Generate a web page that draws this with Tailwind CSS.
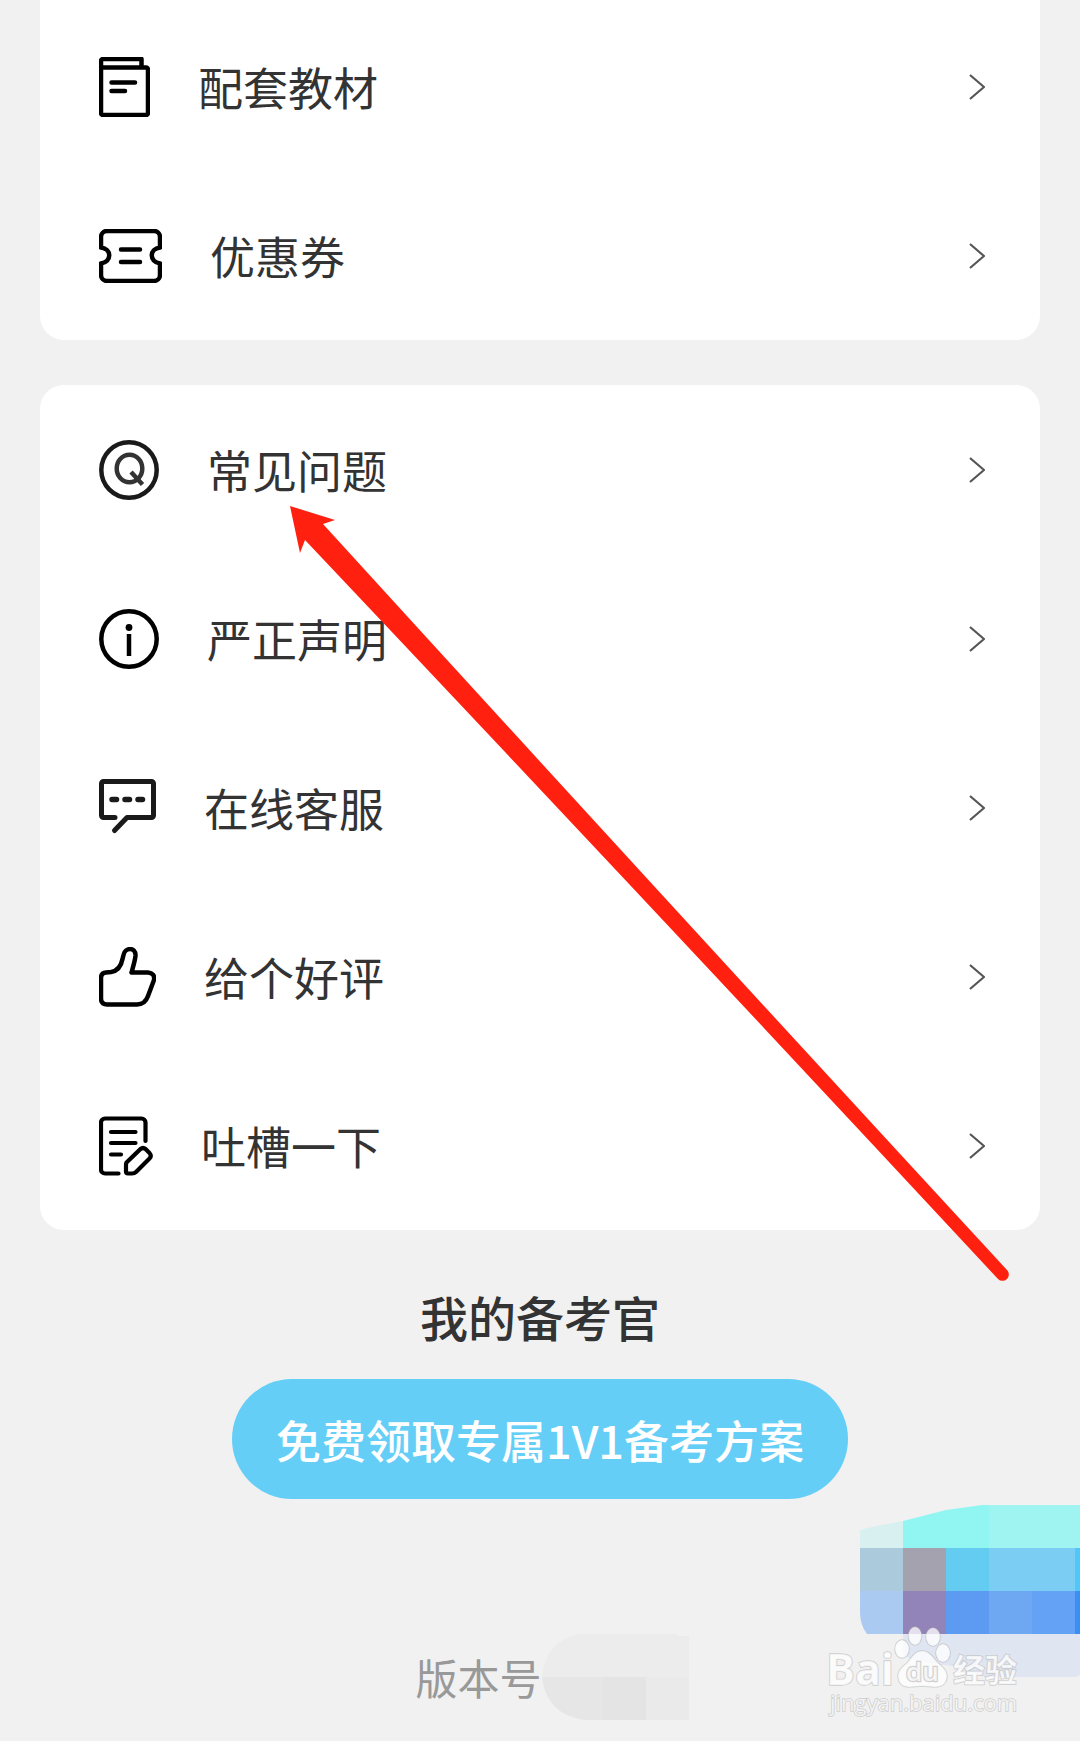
<!DOCTYPE html>
<html lang="zh-CN">
<head>
    <meta charset="UTF-8">
    <meta name="viewport" content="width=device-width, initial-scale=1">
    <title>我的</title>
    <script src="https://cdn.jsdelivr.net/npm/@tailwindcss/browser@4"></script>
</head>
<body class="bg-[#f1f1f1] font-['Noto_Sans_CJK_SC',sans-serif] text-[#333]">
<main class="relative min-h-screen overflow-hidden">

    <nav class="mx-10 rounded-b-3xl bg-white pt-0.5 text-[45px] leading-none">
        <a href="#" class="flex h-[169px] items-center gap-12 pl-[59px] pr-[55px]">
            <svg class="h-[60px] w-[51px] text-black" viewBox="0 0 51 60" fill="none" stroke="currentColor" stroke-width="4.500" stroke-linejoin="round" stroke-linecap="round">
                <path d="M2 10V4a2 2 0 0 1 2-2H42.500V10M2 10.500H47a2 2 0 0 1 2 2V56a2 2 0 0 1-2 2H4a2 2 0 0 1-2-2Z"/>
                <path d="M12.500 25.500H36M12.500 34H26"/>
            </svg>
            <span class="flex-1">配套教材</span>
            <svg class="h-[26px] w-4 text-[#555]" viewBox="0 0 16 26" fill="none" stroke="currentColor" stroke-width="2.200"><path d="M1 1 15 13 1 25"/></svg>
        </a>
        <a href="#" class="flex h-[169px] items-center gap-12 pl-[59px] pr-[55px]">
            <svg class="h-[54px] w-[63px] text-black" viewBox="0 0 63 54" fill="none" stroke="currentColor" stroke-width="4.500" stroke-linecap="round">
                <path stroke-linejoin="round" d="M8 2H55a6 6 0 0 1 6 6V18.500C50 20 50 32.500 61 34.500V46a6 6 0 0 1-6 6H8a6 6 0 0 1-6-6V34.500C13 32.500 13 20 2 18.500V8a6 6 0 0 1 6-6Z"/>
                <path d="M22 20.500H41M22 33H41"/>
            </svg>
            <span class="flex-1">优惠券</span>
            <svg class="h-[26px] w-4 text-[#555]" viewBox="0 0 16 26" fill="none" stroke="currentColor" stroke-width="2.200"><path d="M1 1 15 13 1 25"/></svg>
        </a>
    </nav>

    <nav class="mx-10 mt-[45px] rounded-3xl bg-white text-[45px] leading-none">
        <a href="#" class="flex h-[169px] items-center gap-12 pl-[59px] pr-[55px]">
            <svg class="size-[60px] text-[#1a1a1a]" viewBox="0 0 60 60" fill="none" stroke="currentColor" stroke-width="4.500">
                <circle cx="30" cy="30" r="27.700"/>
                <ellipse cx="30.500" cy="28.500" rx="12.800" ry="13.700" stroke="#333"/>
                <path d="M32 32 43.500 44.500" stroke="#333"/>
            </svg>
            <span class="flex-1">常见问题</span>
            <svg class="h-[26px] w-4 text-[#555]" viewBox="0 0 16 26" fill="none" stroke="currentColor" stroke-width="2.200"><path d="M1 1 15 13 1 25"/></svg>
        </a>
        <a href="#" class="flex h-[169px] items-center gap-12 pl-[59px] pr-[55px]">
            <svg class="size-[60px] text-black" viewBox="0 0 60 60" fill="none" stroke="currentColor" stroke-width="4.500">
                <circle cx="30" cy="30" r="27.700"/>
                <path d="M30 25V47"/>
                <circle cx="30" cy="18.500" r="3.400" fill="currentColor" stroke="none"/>
            </svg>
            <span class="flex-1">严正声明</span>
            <svg class="h-[26px] w-4 text-[#555]" viewBox="0 0 16 26" fill="none" stroke="currentColor" stroke-width="2.200"><path d="M1 1 15 13 1 25"/></svg>
        </a>
        <a href="#" class="flex h-[169px] items-center gap-12 pl-[59px] pr-[55px]">
            <svg class="h-[60px] w-[57px] text-[#1a1a1a]" viewBox="0 -1 57 60" fill="none" stroke="currentColor" stroke-width="5" stroke-linecap="round" stroke-linejoin="round">
                <path d="M16 38.500H4.500a2 2 0 0 1-2-2V4.500a2 2 0 0 1 2-2H52.500a2 2 0 0 1 2 2V36.500a2 2 0 0 1-2 2H28L15.500 51.500"/>
                <path stroke-width="5.500" d="M13 20.500h4.500M26 20.500h4.500M39 20.500h4.500"/>
            </svg>
            <span class="flex-1">在线客服</span>
            <svg class="h-[26px] w-4 text-[#555]" viewBox="0 0 16 26" fill="none" stroke="currentColor" stroke-width="2.200"><path d="M1 1 15 13 1 25"/></svg>
        </a>
        <a href="#" class="flex h-[169px] items-center gap-12 pl-[59px] pr-[55px]">
            <svg class="h-[60px] w-[57px] text-black" viewBox="0 0 57 60" fill="none" stroke="currentColor" stroke-width="4.500" stroke-linejoin="round">
                <path d="M2 31Q2 26 7 25.500L12 25C18 24 22 20 23.500 12L24.500 8C26 0 37 0 36.500 8.500C36 14 34 20 32.500 25.500H49Q56 26 55 33L49 49Q46 57.500 38 57.500H8Q2 57.500 2 51.500Z"/>
            </svg>
            <span class="flex-1">给个好评</span>
            <svg class="h-[26px] w-4 text-[#555]" viewBox="0 0 16 26" fill="none" stroke="currentColor" stroke-width="2.200"><path d="M1 1 15 13 1 25"/></svg>
        </a>
        <a href="#" class="flex h-[169px] items-center gap-12 pl-[59px] pr-[55px]">
            <svg class="h-[60px] w-[54px] text-black" viewBox="0 0 54 60" fill="none" stroke="currentColor" stroke-width="4.200" stroke-linecap="round" stroke-linejoin="round">
                <path d="M46.500 25V6.500a4 4 0 0 0-4-4H6a4 4 0 0 0-4 4V53.500a4 4 0 0 0 4 4H19.500"/>
                <path d="M12 16H36.500M12 27H36.500M12 38.500H22"/>
                <path d="M27.500 46.500 41.500 33Q44 31 46.500 33L50.500 37Q53 40 50.500 42.500L37 56Q35.500 57.500 33 57.500H29Q27 57.500 27 55.500V49Q27 47.500 27.500 46.500Z"/>
            </svg>
            <span class="flex-1">吐槽一下</span>
            <svg class="h-[26px] w-4 text-[#555]" viewBox="0 0 16 26" fill="none" stroke="currentColor" stroke-width="2.200"><path d="M1 1 15 13 1 25"/></svg>
        </a>
    </nav>

    <section class="flex flex-col items-center pt-[62px]">
        <h2 class="text-[48px] font-medium leading-none">我的备考官</h2>
        <button type="button" class="mt-[39px] h-[120px] rounded-full bg-[#64cef7] px-11 text-[45px] font-medium leading-none text-white">免费领取专属1V1备考方案</button>
    </section>

    <footer class="flex items-center justify-center pb-5 pl-6 pt-[135px] text-[42px] leading-none text-[#999]">
        <span>版本号</span>
        <svg class="h-[86px] w-[147px]" viewBox="0 0 147 86">
            <path fill="#ececec" d="M0 43Q4 6 38 0H134L137 2H147V43Z"/>
            <path fill="#e6e6e6" d="M0 43H104V86H42Q4 80 0 43Z"/>
            <path fill="#e4e4e4" d="M61 43h43v43H61z"/>
            <path fill="#eaeaea" d="M104 43h43v43h-43z"/>
        </svg>
    </footer>

    <!-- floating promo, pixelated -->
    <svg class="absolute right-0 top-[1505px] h-[172px] w-[220px]" viewBox="0 0 220 172" shape-rendering="crispEdges">
        <clipPath id="promo"><path d="M0 25Q10 22 43 16L86 5 122 0H220V129H7Q0 120 0 107Z"/></clipPath>
        <path fill="#dfe5f1" d="M43 129H220V169Q218 172 214 172H125Q100 162 86 160 56 158 43 150Z"/>
        <g clip-path="url(#promo)">
            <path fill="#d8f1f0" d="M0 0h43v43H0z"/>
            <path fill="#91f6f1" d="M43 0h86v43H43z"/>
            <path fill="#9ff4f1" d="M129 0h91v43h-91z"/>
            <path fill="#abcadb" d="M0 43h43v43H0z"/>
            <path fill="#a3a2ae" d="M43 43h43v43H43z"/>
            <path fill="#65ccf1" d="M86 43h43v43H86z"/>
            <path fill="#7bcdf3" d="M129 43h86v43h-86z"/>
            <path fill="#4fc7f9" d="M215 43h5v43h-5z"/>
            <path fill="#abcaf1" d="M0 86h43v43H0z"/>
            <path fill="#9283b8" d="M43 86h43v43H43z"/>
            <path fill="#5c9bf1" d="M86 86h43v43H86z"/>
            <path fill="#6ea8f2" d="M129 86h43v43h-43z"/>
            <path fill="#63a2f4" d="M172 86h43v43h-43z"/>
            <path fill="#3b8ef6" d="M215 86h5v43h-5z"/>
        </g>
    </svg>

    <!-- watermark -->
    <svg class="absolute right-[56px] top-[1624px] h-[96px] w-[200px] font-['Open_Sans','Noto_Sans_CJK_SC',sans-serif]" viewBox="0 0 200 96" fill="#fff" fill-opacity=".75" stroke="#b4b4b4" stroke-opacity=".6" stroke-width="1.500" paint-order="stroke">
        <text x="2" y="61" font-size="43" font-weight="700">Bai</text>
        <ellipse cx="78" cy="25" rx="7" ry="9"/>
        <ellipse cx="91" cy="12" rx="6.500" ry="9"/>
        <ellipse cx="109" cy="13" rx="7" ry="9"/>
        <ellipse cx="119" cy="29" rx="7" ry="9"/>
        <path d="M98 27C106 27 109 34 114 39 121 45 125 49 122 57 118 66 107 62 98 62 89 62 79 66 75 57 72 48 77 44 83 39 88 34 90 27 98 27Z"/>
        <text x="82" y="57" font-size="26" font-weight="600" stroke-width="2.500">du</text>
        <text x="129" y="58" font-size="32" font-weight="700">经验</text>
        <text x="6" y="87" font-size="22">jingyan.baidu.com</text>
    </svg>

    <!-- arrow to 常见问题 -->
    <svg class="pointer-events-none absolute left-[290px] top-[506px] h-[776px] w-[720px]" viewBox="0 0 720 776" fill="#ff2010">
        <path d="M0 0 45 14 33 18Q374 392 717 764A6 6 0 0 1 708 773Q363 402 15 34L10 47Z"/>
    </svg>
</main>
</body>
</html>
